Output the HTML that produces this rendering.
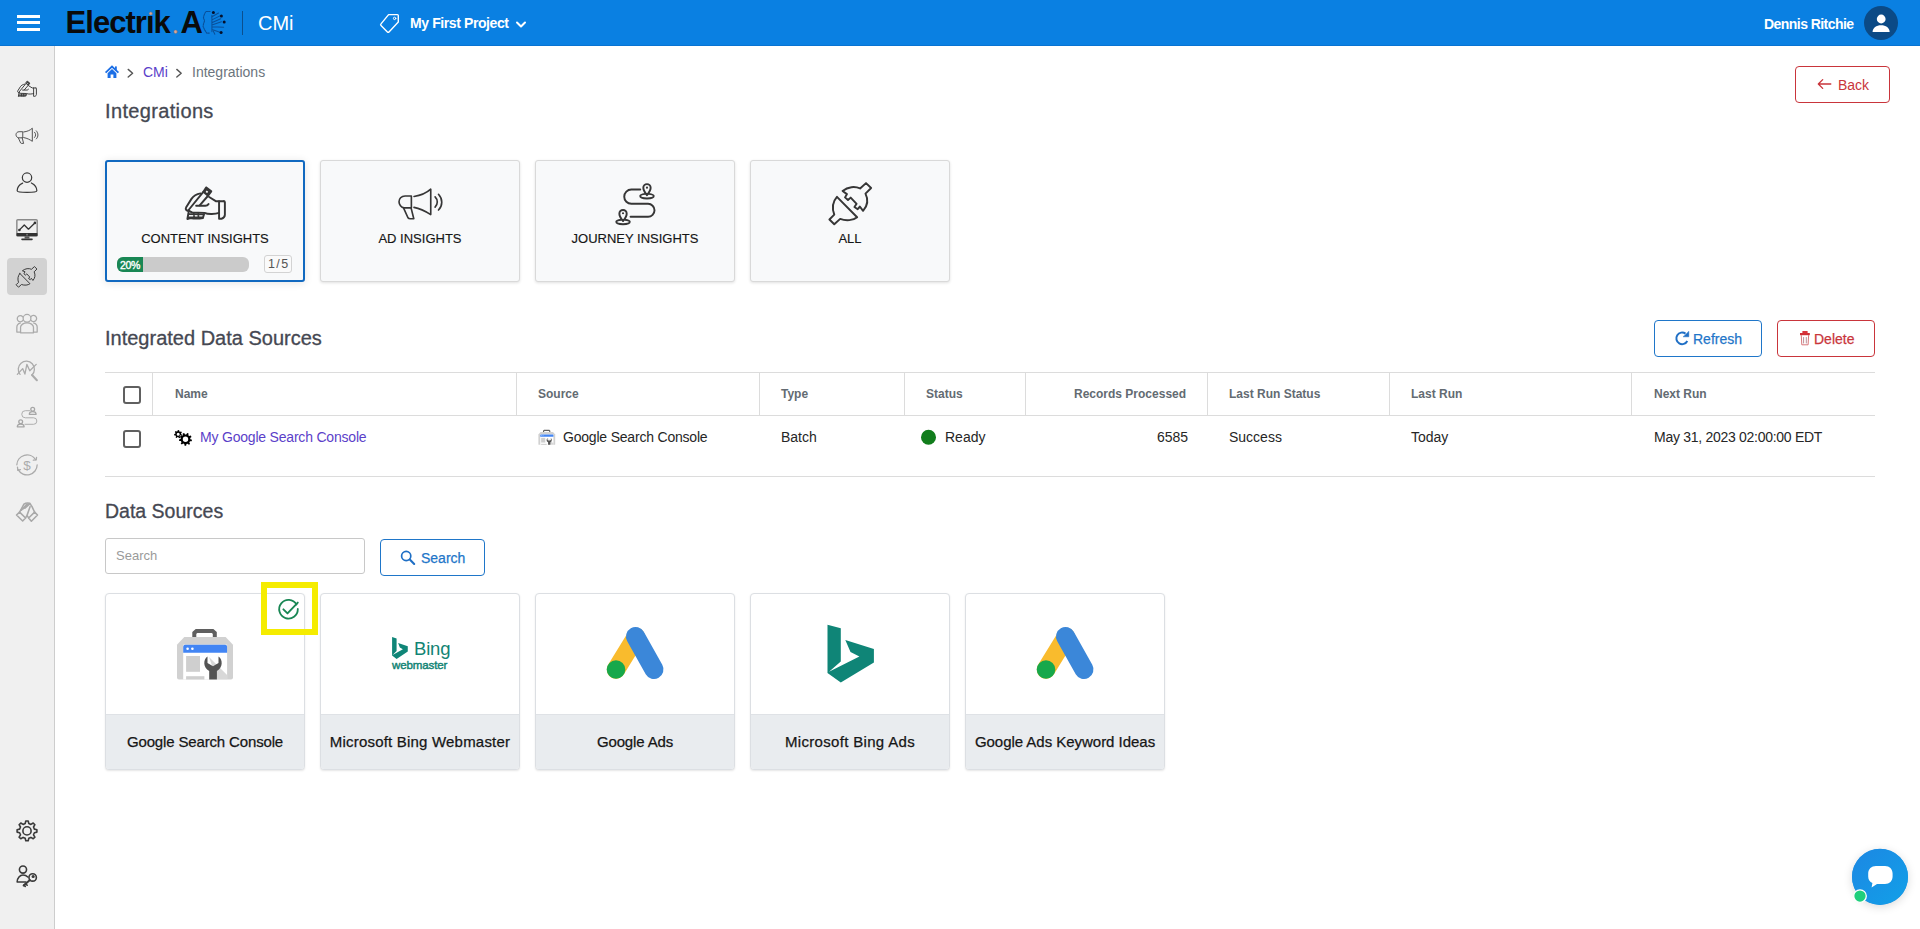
<!DOCTYPE html>
<html><head><meta charset="utf-8">
<style>
*{box-sizing:border-box;margin:0;padding:0}
html,body{width:1920px;height:929px;overflow:hidden;background:#fff;font-family:"Liberation Sans",sans-serif;color:#212529}
.abs{position:absolute}
#hdr{position:absolute;left:0;top:0;width:1920px;height:46px;background:#0a80e2;border-bottom:1px solid #0873d2}
#side{position:absolute;left:0;top:46px;width:55px;height:883px;background:#f0f0f0;border-right:1px solid #cdcdcd}
.sico{position:absolute;left:0;width:54px;display:flex;justify-content:center;align-items:center}
.txt{position:absolute;white-space:nowrap;line-height:1}
.card{position:absolute;top:160px;width:200px;height:122px;background:#f8f9fa;border:1px solid #d9d9d9;border-radius:3px;box-shadow:0 1px 3px rgba(0,0,0,.12)}
.card.sel{border:2px solid #1169c0;box-shadow:0 1px 8px rgba(0,0,0,.11)}
.clabel{position:absolute;left:0;right:0;text-align:center;font-size:13px;color:#161616;-webkit-text-stroke:0.15px #161616;line-height:1;white-space:nowrap}
.vline{position:absolute;top:373px;width:1px;height:42px;background:#dcdcdc}
.th{position:absolute;top:387px;font-size:12px;font-weight:700;color:#636b72;line-height:14px;white-space:nowrap}
.td{position:absolute;top:429px;font-size:14px;color:#262626;line-height:16px;white-space:nowrap}
.btn{position:absolute;border:1px solid;border-radius:4px;background:#fff;font-size:14px;line-height:1;white-space:nowrap}
.btn.m span{-webkit-text-stroke:0.25px currentColor}
.ds{position:absolute;top:593px;width:200px;height:177px;border:1px solid #dcdfe3;border-radius:4px;background:#fff;overflow:hidden;box-shadow:0 1px 2px rgba(0,0,0,.1)}
.ds .foot{position:absolute;left:0;right:0;top:120px;bottom:0;background:#e9ecef;border-top:1px solid #dfe2e6}
.ds .lab{position:absolute;left:0;right:0;top:140px;-webkit-text-stroke:0.25px #161616;text-align:center;font-size:15px;color:#161616;line-height:1;white-space:nowrap;letter-spacing:-0.15px}
</style></head>
<body>
<div id="hdr">
  <!-- hamburger -->
  <div class="abs" style="left:17px;top:15px;width:23px;height:3px;background:#fff"></div>
  <div class="abs" style="left:17px;top:21px;width:23px;height:3px;background:#fff"></div>
  <div class="abs" style="left:17px;top:28px;width:23px;height:3px;background:#fff"></div>
  <div class="txt" style="left:65.5px;top:7px;font-size:31px;font-weight:700;color:#0a0a0a;letter-spacing:-0.95px">Electrık</div><div class="txt" style="left:180.5px;top:7px;font-size:31px;font-weight:700;color:#0a0a0a">A</div>
  <div class="abs" style="left:242px;top:11px;width:1px;height:24px;background:#0b4f8e"></div>
  <div class="txt" style="left:258px;top:13px;font-size:20px;color:#fff">CMi</div>
  <div class="txt" style="left:410px;top:16px;font-size:14px;font-weight:700;color:#fff;letter-spacing:-0.4px">My First Project</div>
  <div class="txt" style="left:1764px;top:17px;font-size:14px;font-weight:700;color:#fff;letter-spacing:-0.55px">Dennis Ritchie</div>
  <div class="abs" style="left:1864px;top:6px;width:34px;height:34px;border-radius:50%;background:#0b4a86"></div>
</div>
<div id="side"></div>

<!-- breadcrumb -->
<div class="txt" style="left:143px;top:65px;font-size:14px;color:#5b3fc9">CMi</div>
<div class="txt" style="left:192px;top:65px;font-size:14px;color:#6c757d">Integrations</div>
<div class="txt" style="left:105px;top:101px;font-size:20px;color:#454852;-webkit-text-stroke:0.3px #454852;letter-spacing:0.35px">Integrations</div>

<div class="btn" style="left:1795px;top:66px;width:95px;height:37px;border-color:#c9353b;color:#c9353b"><span class="abs" style="left:42px;top:11px">Back</span></div>

<!-- cards -->
<div class="card sel" style="left:105px">
  <div class="clabel" style="top:70px">CONTENT INSIGHTS</div>
</div>
<div class="card" style="left:320px"><div class="clabel" style="top:71px">AD INSIGHTS</div></div>
<div class="card" style="left:535px"><div class="clabel" style="top:71px">JOURNEY INSIGHTS</div></div>
<div class="card" style="left:750px"><div class="clabel" style="top:71px">ALL</div></div>

<!-- integrated -->
<div class="txt" style="left:105px;top:328px;font-size:20px;color:#454852;-webkit-text-stroke:0.3px #454852">Integrated Data Sources</div>
<div class="btn m" style="left:1654px;top:320px;width:108px;height:37px;border-color:#1f76c9;color:#1f76c9"><span class="abs" style="left:38px;top:11px">Refresh</span></div>
<div class="btn m" style="left:1777px;top:320px;width:98px;height:37px;border-color:#c9353b;color:#c9353b"><span class="abs" style="left:36px;top:11px">Delete</span></div>

<div class="abs" style="left:105px;top:372px;width:1770px;height:1px;background:#dcdcdc"></div>
<div class="abs" style="left:105px;top:415px;width:1770px;height:1px;background:#dcdcdc"></div>
<div class="abs" style="left:105px;top:476px;width:1770px;height:1px;background:#dcdcdc"></div>

<div class="vline" style="left:152px"></div><div class="vline" style="left:516px"></div><div class="vline" style="left:759px"></div><div class="vline" style="left:904px"></div><div class="vline" style="left:1025px"></div><div class="vline" style="left:1207px"></div><div class="vline" style="left:1389px"></div><div class="vline" style="left:1631px"></div>
<div class="th" style="left:175px">Name</div>
<div class="th" style="left:538px">Source</div>
<div class="th" style="left:781px">Type</div>
<div class="th" style="left:926px">Status</div>
<div class="th" style="left:1074px">Records Processed</div>
<div class="th" style="left:1229px">Last Run Status</div>
<div class="th" style="left:1411px">Last Run</div>
<div class="th" style="left:1654px">Next Run</div>

<div class="td" style="left:200px;color:#5b3fc9;letter-spacing:-0.2px">My Google Search Console</div>
<div class="td" style="left:563px;letter-spacing:-0.2px">Google Search Console</div>
<div class="td" style="left:781px">Batch</div>
<div class="td" style="left:945px">Ready</div>
<div class="td" style="left:1157px">6585</div>
<div class="td" style="left:1229px">Success</div>
<div class="td" style="left:1411px">Today</div>
<div class="td" style="left:1654px;letter-spacing:-0.28px">May 31, 2023 02:00:00 EDT</div>

<!-- data sources -->
<div class="txt" style="left:105px;top:502px;font-size:19.5px;color:#454852;-webkit-text-stroke:0.3px #454852">Data Sources</div>
<div class="abs" style="left:105px;top:538px;width:260px;height:36px;border:1px solid #c8c8c8;border-radius:3px"></div>
<div class="txt" style="left:116px;top:549px;font-size:13px;color:#9a9a9a">Search</div>
<div class="btn m" style="left:380px;top:539px;width:105px;height:37px;border-color:#1f76c9;color:#1f76c9"><span class="abs" style="left:40px;top:11px">Search</span></div>

<div class="ds" style="left:105px"><div class="foot"></div><div class="lab">Google Search Console</div></div>
<div class="ds" style="left:320px"><div class="foot"></div><div class="lab" style="letter-spacing:0.2px">Microsoft Bing Webmaster</div></div>
<div class="ds" style="left:535px"><div class="foot"></div><div class="lab">Google Ads</div></div>
<div class="ds" style="left:750px"><div class="foot"></div><div class="lab" style="letter-spacing:0.32px">Microsoft Bing Ads</div></div>
<div class="ds" style="left:965px"><div class="foot"></div><div class="lab" style="letter-spacing:-0.03px">Google Ads Keyword Ideas</div></div>

<div class="abs" style="left:261px;top:582px;width:57px;height:53px;border:6px solid #f5ec00"></div>

<!-- chat -->
<div class="abs" style="left:1852px;top:849px;width:56px;height:56px;border-radius:50%;background:#1a8fe3;box-shadow:0 2px 10px rgba(0,0,0,.15)"></div>
<!-- progress -->
<div class="abs" style="left:117px;top:257px;width:132px;height:15px;border-radius:6px;background:#cbcbcb;overflow:hidden"><div style="width:26px;height:15px;background:#198754"></div></div>
<div class="txt" style="left:120px;top:259.5px;font-size:10.5px;color:#fff;letter-spacing:-0.3px;-webkit-text-stroke:0.35px #fff">20%</div>
<div class="abs" style="left:264px;top:255px;width:28px;height:18px;border:1px solid #d3d3d3;border-radius:3px;background:#fafafa"></div>
<div class="txt" style="left:268px;top:258px;font-size:12.5px;color:#555;letter-spacing:1.4px">1/5</div>
<svg id="ov" width="1920" height="929" viewBox="0 0 1920 929" style="position:absolute;left:0;top:0;pointer-events:none" fill="none" stroke-linecap="round" stroke-linejoin="round">
<defs>
<g id="hand" stroke="#363636" stroke-width="40">
 <path d="M646,153 L749,235 L683,325 L585,243 Z" fill="#363636"/>
 <rect x="640" y="225" width="38" height="38" fill="#fff" stroke="none" transform="rotate(38 659 244)"/>
 <path d="M585,247 L272,630 M683,325 L510,523"/>
 <path d="M527,276 C440,290 380,330 340,390 L231,564 C205,610 240,640 297,640"/>
 <path d="M437,531 L626,531 C650,531 680,515 692,498"/>
 <path d="M297,645 L354,671 L610,679 C680,715 840,705 910,680"/>
 <path d="M705,350 L850,440 L1010,440"/>
 <path d="M910,440 L910,800 L960,800 C1000,790 1030,760 1030,720 L1030,460 C1030,445 1020,440 1010,440"/>
 <path d="M280,671 L256,805 L320,786 C390,800 500,800 577,786 L600,704"/>
 <path d="M390,700 L395,780 M480,700 L485,780 M290,706 L590,712 M270,770 L580,770" stroke-width="36"/>
</g>
<g id="mega" stroke="#363636" stroke-width="34">
 <path d="M400,330 L270,330 C190,330 145,390 145,450 C145,510 190,570 250,575 L400,575 Z"/>
 <path d="M240,580 L330,780 C340,795 360,800 380,800 L450,800 L395,580"/>
 <path d="M455,340 C600,320 700,280 800,190 L800,715 C700,650 600,590 455,565"/>
 <path d="M890,350 C950,410 950,500 890,560 M960,295 C1050,390 1050,530 960,620"/>
</g>
<g id="journey" stroke="#363636" stroke-width="36">
 <path d="M655,215 L490,215 A132,132 0 0 0 490,480 L800,480 A120,120 0 0 1 800,720 L475,720"/>
 <path d="M745,295 C690,302 655,318 655,335 C655,362 715,380 780,380 C845,380 905,362 905,335 C905,318 870,302 815,295"/>
 <path d="M780,320 C745,275 712,235 712,182 A68,68 0 1 1 848,182 C848,235 815,275 780,320 Z"/>
 <circle cx="780" cy="180" r="20" fill="#363636" stroke="none"/>
 <path d="M300,775 C245,782 210,798 210,815 C210,842 270,860 335,860 C400,860 460,842 460,815 C460,798 425,782 370,775"/>
 <path d="M335,800 C300,755 267,715 267,662 A68,68 0 1 1 403,662 C403,715 370,755 335,800 Z"/>
 <circle cx="335" cy="655" r="20" fill="#363636" stroke="none"/>
</g>
<g id="plug" stroke="#363636" stroke-width="36">
 <path d="M315,350 L690,730 C620,790 480,800 375,760 L265,860 L175,770 L265,680 C225,570 235,440 315,350 Z"/>
 <path d="M420,240 C520,160 650,150 745,195 L855,95 L950,185 L845,290 C900,400 880,520 800,610 L740,530 L700,580 L640,540 L680,480 L570,365 L520,410 L465,360 L500,300 Z"/>
</g>
</defs>

<!-- header -->
<g stroke="#0a4f98" stroke-width="0.9" transform="translate(198,6) scale(0.0366)">
 <path d="M330,150 L220,150 C180,200 150,280 150,330 L180,400 C160,460 140,520 140,560 L180,650 L240,740 L330,740" stroke-dasharray="40 25" stroke-width="30"/>
 <path d="M380,250 L380,700 M370,300 L560,190 M380,380 L600,270 M390,450 L620,350 M400,510 L640,430 M380,570 L700,580 M380,640 L600,720 M420,690 L460,770" stroke-width="28"/>
</g>
<g fill="#06102a">
 <circle cx="213.4" cy="12.4" r="1.5"/><circle cx="221.4" cy="15.9" r="1.5"/><circle cx="224.2" cy="22.1" r="1.5"/><circle cx="221.1" cy="32.6" r="1.5"/>
</g>
<circle cx="150.8" cy="13.5" r="1.6" fill="#d9a79a" stroke="#8a6a60" stroke-width="0.4"/>
<circle cx="175.6" cy="31.8" r="1.7" fill="#d9a79a" stroke="#8a6a60" stroke-width="0.4"/>
<path d="M388.6,14.6 L397.4,14.6 Q398.3,14.6 398.3,15.5 L398.3,22.1 L389,31.9 Q388.2,32.7 387.4,31.9 L381,25.5 Q380.2,24.7 381,23.9 Z" stroke="#fff" stroke-width="1.4"/>
<circle cx="394.6" cy="18.4" r="1.2" stroke="#fff" stroke-width="1"/>
<path d="M517,22.5 L521,26.5 L525,22.5" stroke="#fff" stroke-width="2"/>
<circle cx="1881.2" cy="19" r="4.4" fill="#fff"/>
<path d="M1872.6,32 C1872.6,27.6 1876.4,25.2 1881.1,25.2 C1885.8,25.2 1889.6,27.6 1889.6,32 Z" fill="#fff"/>

<!-- sidebar -->
<rect x="7" y="258" width="40" height="37" rx="4" fill="#d2d2d2"/>
<use href="#hand" transform="translate(12.4,77.7) scale(0.0233)"/>
<use href="#mega" transform="translate(12.4,123.5) scale(0.0249)"/>
<g stroke="#3a3a3a" stroke-width="38" transform="translate(12,166) scale(0.03229)">
 <circle cx="465" cy="360" r="145"/>
 <path d="M330,530 C220,580 160,690 160,770 C160,800 300,820 465,820 C630,820 770,800 770,770 C770,690 710,580 600,525"/>
</g>
<g transform="translate(12,214) scale(0.03229)">
 <rect x="150" y="175" width="630" height="500" rx="30" stroke="#8a8a8a" stroke-width="45"/>
 <rect x="140" y="590" width="650" height="100" rx="20" fill="#333"/>
 <rect x="450" y="615" width="30" height="50" fill="#aaa"/>
 <rect x="390" y="690" width="150" height="70" fill="#555"/>
 <path d="M310,785 L620,785" stroke="#333" stroke-width="50"/>
 <path d="M225,500 L380,340 L510,470 L715,270" stroke="#333" stroke-width="40"/>
 <circle cx="230" cy="495" r="40" fill="#333"/><circle cx="710" cy="275" r="40" fill="#333"/>
</g>
<use href="#plug" transform="translate(11.4,264.05) scale(0.02691)"/>
<g stroke="#ababab" stroke-width="40" transform="translate(12,308) scale(0.03229)">
 <path d="M340,380 A95,95 0 1 1 330,270 M590,270 A95,95 0 1 1 590,380"/>
 <circle cx="465" cy="320" r="120"/>
 <path d="M265,770 L265,600 C265,520 360,460 465,460 C570,460 665,520 665,600 L665,770 Z"/>
 <path d="M255,465 C180,480 150,540 150,600 L150,745 L265,745 M675,465 C750,480 780,540 780,600 L780,745 L665,745"/>
</g>
<g stroke="#ababab" transform="translate(12,355) scale(0.03229)">
 <path d="M250,600 A250,250 0 1 1 620,620" stroke-width="40"/>
 <path d="M620,620 L770,780" stroke-width="65"/>
 <path d="M165,600 L330,420 L400,590 L460,290 L550,490 L750,290" stroke-width="40"/>
</g>
<g stroke="#ababab" stroke-width="36" transform="translate(-290.4,315.9) scale(0.5)">
 <path d="M640,189.6 L631.4,189.6 A7,7 0 0 0 631.4,203.8 L648,203.8 A6.5,6.5 0 0 1 648,216.8 L630.6,216.8" stroke-width="1.9"/>
</g>
<g stroke="#a6a6a6" fill="none" stroke-width="1.3">
 <circle cx="32.7" cy="409.2" r="1.9"/><path d="M29.3,414.3 C29.3,412.3 31,411.6 32.7,411.6 C34.4,411.6 36.1,412.3 36.1,414.3 Z"/>
 <circle cx="20.7" cy="421.7" r="1.9"/><path d="M17.3,426.8 C17.3,424.8 19,424.1 20.7,424.1 C22.4,424.1 24.1,424.8 24.1,426.8 Z"/>
</g>
<g stroke="#ababab" stroke-width="40" transform="translate(12,449) scale(0.03229)">
 <path d="M150,490 A315,315 0 0 1 730,330"/>
 <path d="M660,345 L750,340 L760,260" />
 <path d="M780,490 A315,315 0 0 1 190,640"/>
 <path d="M170,560 L180,660 L260,640"/>
</g>
<text x="27" y="469.8" font-size="13.5" fill="#ababab" text-anchor="middle" font-family="Liberation Sans">$</text>
<g stroke="#a8a8a8" stroke-width="48" transform="translate(12,496) scale(0.03229)">
 <path d="M140,590 L235,500 L420,680 L330,775 Z M790,590 L700,500 L515,680 L600,780 Z"/>
 <path d="M235,500 L300,380 L370,250 C420,215 500,210 550,225 L620,330 L700,500"/>
 <path d="M290,440 L450,260 M340,400 L500,240 M400,380 L540,250"/>
 <path d="M420,680 L465,600 L515,680 M465,600 L560,330"/>
</g>
<path d="M34.4,829.1 L36.9,829.7 L36.9,832.1 L34.4,832.7 L33.5,834.8 L34.9,837.1 L33.2,838.8 L30.9,837.4 L28.8,838.3 L28.2,840.8 L25.8,840.8 L25.2,838.3 L23.1,837.4 L20.8,838.8 L19.1,837.1 L20.5,834.8 L19.6,832.7 L17.1,832.1 L17.1,829.7 L19.6,829.1 L20.5,827.0 L19.1,824.7 L20.8,823.0 L23.1,824.4 L25.2,823.5 L25.8,821.0 L28.2,821.0 L28.8,823.5 L30.9,824.4 L33.2,823.0 L34.9,824.7 L33.5,827.0Z" stroke="#3a3a3a" stroke-width="1.6"/>
<circle cx="27" cy="830.9" r="4.1" stroke="#3a3a3a" stroke-width="1.6"/>
<g stroke="#3a3a3a" stroke-width="50" transform="translate(12,861) scale(0.03229)">
 <circle cx="340" cy="265" r="110"/>
 <path d="M160,650 C160,520 250,435 340,435 C400,435 450,455 490,495 M160,650 L430,650"/>
 <circle cx="640" cy="510" r="115"/>
 <circle cx="655" cy="480" r="25" fill="#3a3a3a"/>
 <path d="M555,590 L360,760" stroke-width="60"/>
 <path d="M420,700 L470,750 M370,745 L410,785"/>
</g>

<!-- breadcrumb -->
<path d="M105.6,72.6 L112,66.5 L118.4,72.6" stroke="#1c6fe6" stroke-width="1.8" stroke-linecap="butt" stroke-linejoin="miter"/>
<path d="M107.6,73.2 L112,69 L116.4,73.2 L116.4,78 L113.4,78 L113.4,74.6 L110.6,74.6 L110.6,78 L107.6,78 Z" fill="#1c6fe6"/>
<rect x="115" y="66.4" width="1.8" height="3.6" fill="#1c6fe6"/>
<path d="M128.2,69.4 L132.6,73.2 L128.2,77" stroke="#555" stroke-width="1.4"/>
<path d="M176.8,69.4 L181.2,73.2 L176.8,77" stroke="#555" stroke-width="1.4"/>
<path d="M1830.8,84 L1818.5,84 M1822.7,79.6 L1818.3,84 L1822.7,88.4" stroke="#c9353b" stroke-width="1.3"/>

<!-- cards -->
<use href="#hand" transform="translate(175,180) scale(0.048426)"/>
<use href="#mega" transform="translate(392,180) scale(0.048426)"/>
<use href="#journey" transform="translate(605,178) scale(0.05382)"/>
<use href="#plug" transform="translate(820,178) scale(0.05382)"/>

<!-- buttons -->
<path d="M1687.3,341 A5.8,5.8 0 1 1 1685.5,333.6" stroke="#1f6fc5" stroke-width="2" stroke-linecap="butt"/>
<path d="M1688.8,331.6 L1688.8,336.8 L1683.4,336.8 Z" fill="#1f6fc5" stroke="#1f6fc5" stroke-width="0.5"/>
<rect x="1800" y="333" width="9.8" height="2.2" fill="#cf2f35"/>
<rect x="1802.4" y="331" width="5.2" height="2.4" fill="#d9333a"/>
<path d="M1801.3,335.5 L1801.8,344.8 L1808.1,344.8 L1808.6,335.5" stroke="#d8777b" stroke-width="1"/>
<path d="M1803.6,337.5 L1803.6,343 M1806.3,337.5 L1806.3,343" stroke="#a8707a" stroke-width="0.8"/>
<circle cx="406.2" cy="556" r="4.6" stroke="#1f6fc5" stroke-width="1.7"/>
<path d="M409.8,559.6 L414.2,564" stroke="#1f6fc5" stroke-width="2.1"/>

<!-- table -->
<rect x="124" y="387" width="16" height="16" rx="2" stroke="#606060" stroke-width="2"/>
<rect x="124" y="431" width="16" height="16" rx="2" stroke="#606060" stroke-width="2"/>
<path d="M181.2,434.2 L182.3,434.7 L181.9,436.1 L180.7,435.9 L180.1,436.5 L180.3,437.7 L179.0,438.2 L178.4,437.2 L177.5,437.1 L176.8,438.0 L175.6,437.4 L176.0,436.2 L175.5,435.5 L174.3,435.5 L174.1,434.1 L175.2,433.7 L175.5,432.9 L174.8,432.0 L175.7,430.9 L176.7,431.6 L177.5,431.3 L177.8,430.1 L179.2,430.2 L179.3,431.4 L180.1,431.8 L181.2,431.4 L181.9,432.5 L181.1,433.3ZM176.7,434.2 a1.5,1.5 0 1 0 3.0,0 a1.5,1.5 0 1 0 -3.0,0Z M190.4,439.2 L192.0,439.8 L191.7,441.3 L190.0,441.3 L189.3,442.4 L190.1,443.9 L188.9,444.8 L187.6,443.7 L186.5,444.1 L186.1,445.8 L184.6,445.7 L184.3,444.0 L183.2,443.6 L181.8,444.6 L180.7,443.6 L181.5,442.2 L180.9,441.1 L179.2,441.0 L179.0,439.5 L180.6,438.9 L180.9,437.7 L179.6,436.6 L180.4,435.3 L182.0,435.9 L182.9,435.1 L182.7,433.4 L184.2,432.9 L185.0,434.4 L186.2,434.5 L187.2,433.0 L188.6,433.6 L188.3,435.3 L189.2,436.1 L190.8,435.5 L191.5,436.9 L190.2,438.0ZM182.8,439.3 a2.7,2.7 0 1 0 5.4,0 a2.7,2.7 0 1 0 -5.4,0Z" fill="#000" fill-rule="evenodd"/>
<circle cx="928.5" cy="437.2" r="7.5" fill="#117d1c"/>

<!-- GSC big -->
<g id="gsc">
 <path d="M194.3,637.5 L194.3,633 L196.5,631 L212.6,631 L214.8,633 L214.8,637.5" stroke="#5f5f5f" stroke-width="4" stroke-linecap="butt" stroke-linejoin="miter"/>
 <path d="M184.3,637 L225.6,637 L233,644.7 L233,677.5 Q233,679.5 231,679.5 L179,679.5 Q177,679.5 177,677.5 L177,644.7 Z" fill="#d1d1d1"/>
 <rect x="183.2" y="644.7" width="43.9" height="34.8" fill="#fff"/>
 <path d="M183.2,646.7 Q183.2,644.7 185.2,644.7 L225.1,644.7 Q227.1,644.7 227.1,646.7 L227.1,652.7 L183.2,652.7 Z" fill="#4285f4"/>
 <circle cx="187.6" cy="648.7" r="1.3" fill="#fff"/><circle cx="192.4" cy="648.7" r="1.3" fill="#fff"/>
 <rect x="186.1" y="656" width="13.9" height="15.8" fill="#cfcfcf"/>
 <rect x="186.1" y="676.2" width="18.3" height="3.3" fill="#cfcfcf"/>
 <path d="M209,657 L227.1,675 L227.1,679.5 L216.9,679.5 Z" fill="#d8d8d8"/>
 <path d="M207.5,656.6 C203,659.5 203,668 209.2,671 L209.2,679.5 L216.9,679.5 L216.9,671 C223,668 223,659.5 218.5,656.6 L218.5,663 L213,666.2 L207.5,663 Z" fill="#545454"/>
</g>
<use href="#gsc" transform="translate(485.3,241) scale(0.30)"/>
<!-- check circle -->
<path d="M296.5,604.5 A9.3,9.3 0 1 0 297.8,609" stroke="#198754" stroke-width="1.8"/>
<path d="M283.4,609.3 L287.5,613.4 L297.8,602.6" stroke="#198754" stroke-width="1.9"/>
<!-- bing webmaster -->
<g id="bingb"><path d="M827.5,624.7 L840.8,628.3 L840.8,661.4 L829,671.8 L859.4,656.6 L850.5,652.1 L845.3,640 L873.9,648.9 L873.9,662.6 L840.8,682.4 L827.5,673.1 Z" fill="#0f8577"/></g>
<use href="#bingb" transform="translate(112.4,399.7) scale(0.338,0.38)"/>
<text x="414" y="654.6" font-size="18.5" fill="#128474" font-family="Liberation Sans" letter-spacing="-0.2">Bing</text>
<text x="392" y="668.8" font-size="11.5" fill="#128474" stroke="#128474" stroke-width="0.45" font-family="Liberation Sans" letter-spacing="-0.1">webmaster</text>
<!-- google ads -->
<g id="gads">
 <path d="M636,637 L616,669.5" stroke="#f9bb2d" stroke-width="18.6"/>
 <path d="M635.5,636.5 L654,669.5" stroke="#3b87d9" stroke-width="19"/>
 <circle cx="616" cy="669.5" r="9.3" fill="#17a84b"/>
</g>
<use href="#gads" transform="translate(430,0)"/>
<!-- chat -->
<defs><linearGradient id="cg" x1="0" y1="0" x2="1" y2="1"><stop offset="0" stop-color="#1c87e3"/><stop offset="1" stop-color="#12a0e8"/></linearGradient></defs>
<circle cx="1880" cy="876.7" r="28" fill="url(#cg)"/>
<path d="M1876,866 L1885,866 C1889.5,866 1892.6,869 1892.6,873.5 L1892.6,876.5 C1892.6,881 1889.5,884 1885,884 L1877,884 L1871.6,887.6 L1872.4,883 C1869.8,882 1868.2,879.5 1868.2,876.5 L1868.2,873.5 C1868.2,869 1871.5,866 1876,866 Z" fill="#fff"/>
<circle cx="1860" cy="896.1" r="6.3" fill="#1fcf7c" stroke="#fff" stroke-width="1.3"/>
</svg>

</body></html>
